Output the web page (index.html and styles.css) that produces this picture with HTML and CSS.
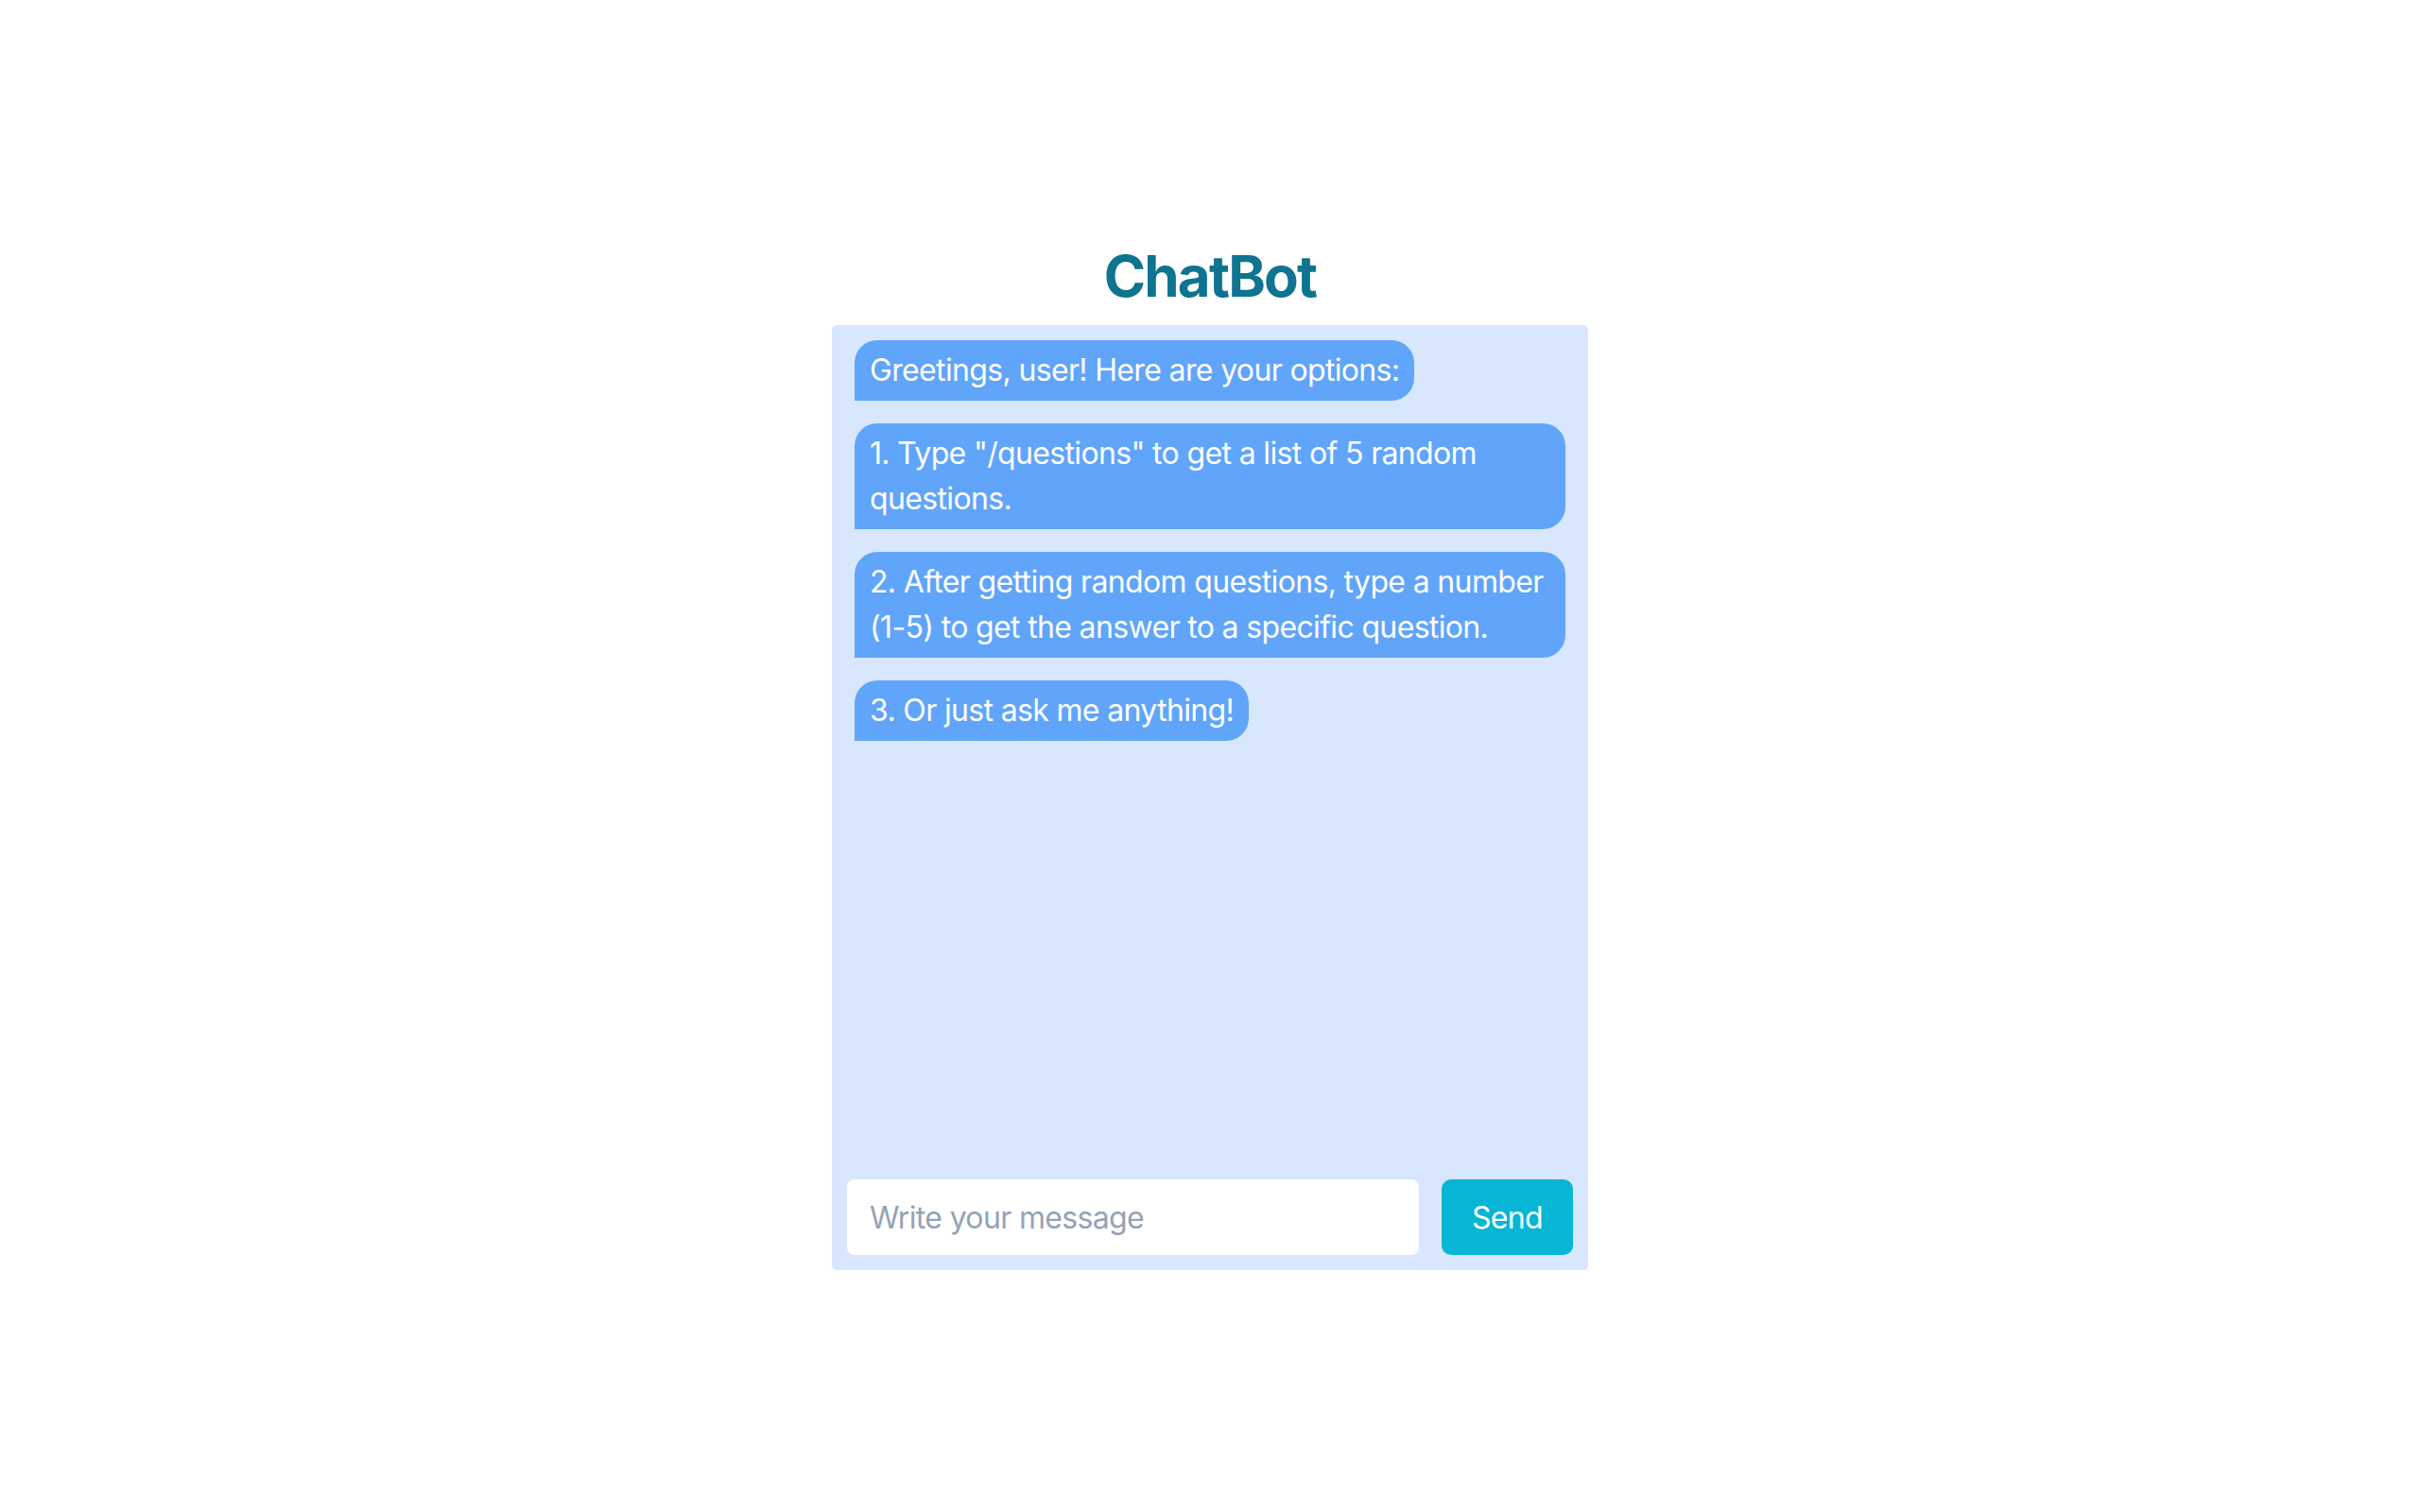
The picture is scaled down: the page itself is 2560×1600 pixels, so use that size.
FILE: index.html
```html
<!DOCTYPE html>
<html lang="en">
<head>
<meta charset="utf-8">
<title>ChatBot</title>
<link rel="stylesheet" href="styles.css">
</head>
<body>
  <main class="page">
    <h1 class="title">ChatBot</h1>
    <section class="chat">
      <div class="messages">
        <div class="bubble">Greetings, user! Here are your options:</div>
        <div class="bubble">1. Type "/questions" to get a list of 5 random questions.</div>
        <div class="bubble">2. After getting random questions, type a number (1-5) to get the answer to a specific question.</div>
        <div class="bubble">3. Or just ask me anything!</div>
      </div>
      <form class="composer">
        <input class="composer-input" type="text" placeholder="Write your message">
        <button class="composer-send" type="button">Send</button>
      </form>
    </section>
  </main>
</body>
</html>
```

FILE: styles.css
```css
* {
  box-sizing: border-box;
}

html, body {
  margin: 0;
  padding: 0;
  background: #ffffff;
}

body {
  font-family: Inter, "Noto Sans", "Liberation Sans", sans-serif;
  -webkit-font-smoothing: antialiased;
}

.page {
  height: 100vh;
  display: flex;
  flex-direction: column;
  align-items: center;
  justify-content: center;
}

.title {
  margin: 0 0 16px;
  font-size: 60px;
  line-height: 72px;
  font-weight: 700;
  letter-spacing: -1.8px;
  color: #0e7490;
}

.chat {
  width: 800px;
  height: 1000px;
  background: #d8e7fd;
  border-radius: 5px;
  padding: 16px;
  display: flex;
  flex-direction: column;
}

.messages {
  flex: 1;
  display: flex;
  flex-direction: column;
  align-items: flex-start;
  gap: 24px;
  padding: 0 8px;
  overflow-y: auto;
}

.bubble {
  background: #60a5fa;
  color: #ffffff;
  font-size: 32px;
  line-height: 48px;
  letter-spacing: -0.65px;
  padding: 8px 16px;
  border-radius: 24px 24px 24px 0;
}

.composer {
  display: flex;
  gap: 24px;
  margin: 0;
}

.composer-input {
  flex: 1;
  min-width: 0;
  height: 80px;
  border: none;
  outline: none;
  border-radius: 8px;
  background: #ffffff;
  padding: 0 24px;
  font-family: inherit;
  font-size: 32px;
  letter-spacing: -0.65px;
  color: #1e293b;
}

.composer-input::placeholder {
  color: #94a3b8;
}

.composer-send {
  height: 80px;
  border: none;
  border-radius: 10px;
  background: #06b6d4;
  color: #ffffff;
  padding: 0 32px;
  font-family: inherit;
  font-size: 32px;
  letter-spacing: -0.65px;
  cursor: pointer;
}
```
